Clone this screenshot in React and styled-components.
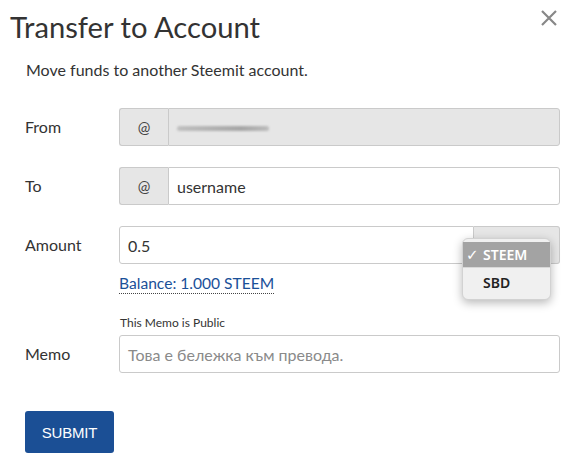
import React from "react";
import styled, { createGlobalStyle } from "styled-components";

const Global = createGlobalStyle`
  html, body { margin: 0; padding: 0; background: #fff; }
  body { font-family: Lato, "Noto Sans", sans-serif; color: #333; }
  * { box-sizing: border-box; }
`;

const Modal = styled.div`
  position: relative;
  display: flow-root;
  width: 572px;
  height: 466px;
  padding: 0 12px 0 25px;
`;

const Close = styled.button`
  position: absolute;
  top: 9px;
  right: 14px;
  width: 18px;
  height: 18px;
  padding: 0;
  border: 0;
  background: transparent;
  cursor: pointer;
  svg { display: block; }
`;

const Title = styled.h2`
  margin: 9px 0 0 -15px;
  font-size: 29.2px;
  line-height: 36px;
  font-weight: 400;
  color: #333;
`;

const Subtitle = styled.p`
  margin: 15px 0 0 1px;
  font-size: 16px;
  line-height: 20px;
  color: #333;
`;

const Form = styled.form`
  margin-top: 28px;
  display: flex;
  flex-direction: column;
  gap: 21px;
`;

const Field = styled.div`
  display: grid;
  grid-template-columns: 94px 1fr;
  grid-template-rows: ${(p) => (p.$note ? "auto 38px" : "auto")};
  align-items: start;
`;

const Label = styled.label`
  grid-column: 1;
  grid-row: ${(p) => (p.$row || 1)};
  font-size: 16px;
  line-height: 38px;
  color: #333;
`;

const Control = styled.div`
  grid-column: 2;
  grid-row: ${(p) => (p.$row || 1)};
  display: flex;
  flex-direction: column;
`;

const Group = styled.div`
  position: relative;
  display: flex;
  height: 38px;
`;

const Addon = styled.span`
  width: 49px;
  flex: none;
  display: flex;
  align-items: center;
  justify-content: center;
  background: #e6e6e6;
  border: 1px solid #cacaca;
  border-right: 0;
  border-radius: 3px 0 0 3px;
  font-size: 15px;
  color: #444;
`;

const Input = styled.div`
  flex: 1;
  display: flex;
  align-items: center;
  padding: 0 8px;
  background: ${(p) => (p.$disabled ? "#e6e6e6" : "#fff")};
  border: 1px solid #cacaca;
  border-radius: ${(p) => (p.$attached ? "0 3px 3px 0" : p.$left ? "3px 0 0 3px" : "3px")};
  font-size: 16px;
  color: ${(p) => (p.$placeholder ? "#8a8a8a" : "#333")};
`;

const Blur = styled.span`
  display: block;
  width: 92px;
  height: 5px;
  margin-top: 2px;
  border-radius: 3px;
  background: linear-gradient(90deg, #c0c0c0, #a6a6a6 70%, #bcbcbc);
  filter: blur(1px);
`;

const SelectBox = styled.div`
  width: 86px;
  flex: none;
  background: #e6e6e6;
  border: 1px solid #cacaca;
  border-left: 0;
  border-radius: 0 3px 3px 0;
  position: relative;
`;

const Menu = styled.ul`
  position: absolute;
  left: -12px;
  top: 11px;
  width: 89px;
  margin: 0;
  padding: 3px 0;
  list-style: none;
  background: #f0f0f0;
  border: 1px solid #d2d2d2;
  border-radius: 6px;
  box-shadow: 0 3px 10px rgba(0, 0, 0, 0.28);
  z-index: 2;
`;

const Option = styled.li`
  height: ${(p) => (p.$active ? "26px" : "28px")};
  display: flex;
  align-items: center;
  padding-left: 3px;
  font-family: "Noto Sans", sans-serif;
  font-size: 14px;
  font-weight: 600;
  color: ${(p) => (p.$active ? "#fff" : "#222")};
  background: ${(p) => (p.$active ? "#a3a3a3" : "transparent")};
  border-bottom: ${(p) => (p.$active ? "1px solid #d8d8d8" : "0")};
`;

const Check = styled.span`
  width: 17px;
  display: inline-block;
  font-family: "DejaVu Sans", sans-serif;
  font-size: 15px;
  font-weight: 400;
`;

const Balance = styled.a`
  align-self: flex-start;
  margin-top: 9px;
  font-size: 15.6px;
  line-height: 20px;
  color: #1a5099;
  text-decoration: none;
  border-bottom: 1px dotted #444;
`;

const Note = styled.span`
  grid-column: 2;
  grid-row: 1;
  font-size: 12px;
  line-height: 16px;
  margin: 0 0 4px 1px;
  color: #333;
`;

const MemoWrap = styled(Field)`
  margin-top: 21px;
`;

const Submit = styled.button`
  margin-top: 38px;
  display: block;
  width: 89px;
  height: 42px;
  border: 0;
  border-radius: 3px;
  background: #1b4f95;
  color: #fff;
  font-family: "Liberation Sans", Arial, sans-serif;
  font-size: 15px;
  letter-spacing: -0.2px;
  cursor: pointer;
`;

function MemoField() {
  return (
    <MemoWrap $note>
      <Note>This Memo is Public</Note>
      <Label $row={2}>Memo</Label>
      <Control $row={2}>
        <Group>
          <Input $placeholder>Това е бележка към превода.</Input>
        </Group>
      </Control>
    </MemoWrap>
  );
}

export default function App() {
  return (
    <Modal>
      <Global />
      <Close aria-label="close">
        <svg width="18" height="18" viewBox="0 0 18 18">
          <path d="M2 2 L16 16 M16 2 L2 16" stroke="#888" strokeWidth="2.2" />
        </svg>
      </Close>
      <Title>Transfer to Account</Title>
      <Subtitle>Move funds to another Steemit account.</Subtitle>
      <Form onSubmit={(e) => e.preventDefault()}>
        <Field>
          <Label>From</Label>
          <Control>
            <Group>
              <Addon>@</Addon>
              <Input $disabled $attached>
                <Blur />
              </Input>
            </Group>
          </Control>
        </Field>
        <Field>
          <Label>To</Label>
          <Control>
            <Group>
              <Addon>@</Addon>
              <Input $attached>username</Input>
            </Group>
          </Control>
        </Field>
        <Field>
          <Label>Amount</Label>
          <Control>
            <Group>
              <Input $left>0.5</Input>
              <SelectBox>
                <Menu>
                  <Option $active>
                    <Check>✓</Check>STEEM
                  </Option>
                  <Option>
                    <Check />
                    SBD
                  </Option>
                </Menu>
              </SelectBox>
            </Group>
            <Balance href="#">Balance: 1.000 STEEM</Balance>
          </Control>
        </Field>
      </Form>
      <MemoField />
      <Submit type="button">SUBMIT</Submit>
    </Modal>
  );
}
